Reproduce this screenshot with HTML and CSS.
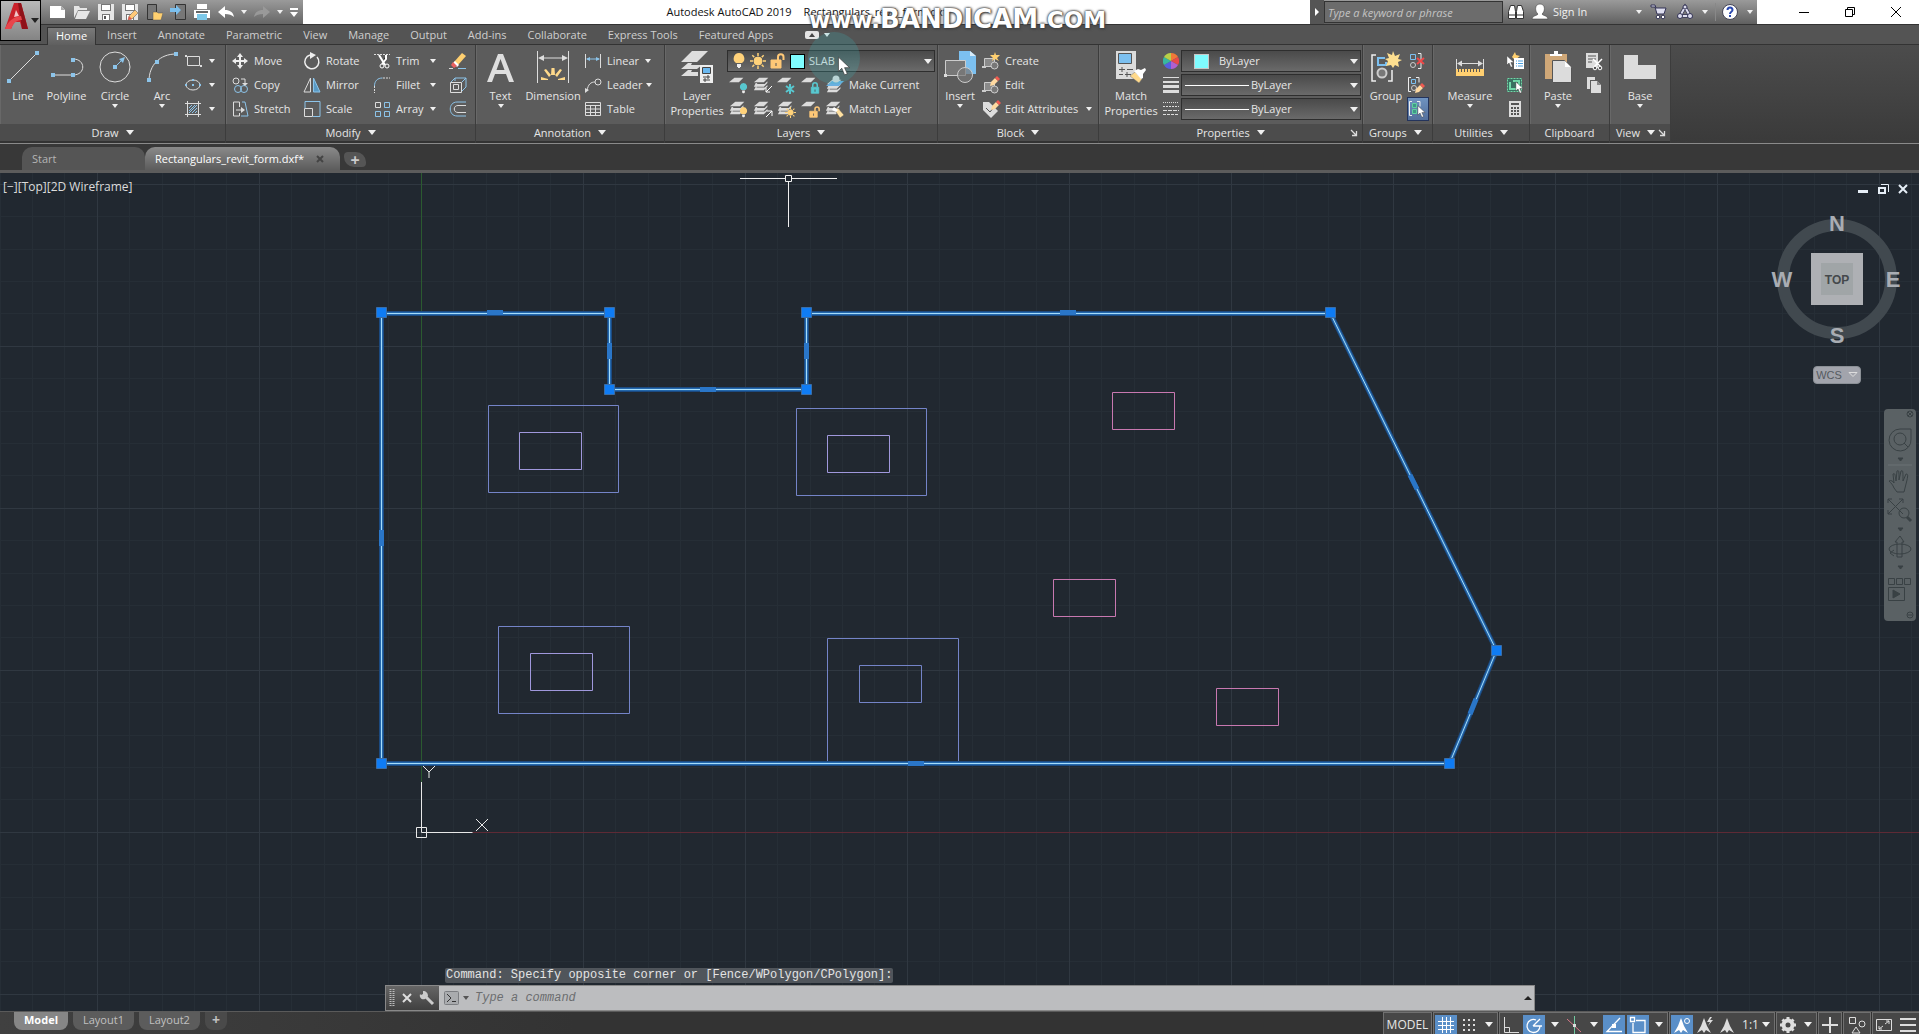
FILE: index.html
```html
<!DOCTYPE html>
<html lang="en">
<head>
<meta charset="utf-8">
<title>Autodesk AutoCAD 2019 - Rectangulars_revit_form.dxf</title>
<link rel="stylesheet" href="styles.css">
</head>
<body>
<svg class="defs" aria-hidden="true">
  <symbol id="sheets" viewBox="0 0 20 20"><path fill="#dcdcdc" d="M7 3h10l-5 5H1zM3 9h2l-1 1h9l3-3v2l-4 4H1zM3 13h1v1h9l3-3v2l-4 4H1z"/></symbol>
  <symbol id="sheet" viewBox="0 0 20 20"><path fill="#dcdcdc" d="M6 3h10l-5 5H0z"/></symbol>
  <symbol id="bulb" viewBox="0 0 12 16"><path d="M6 0a5.500 5.500 0 0 0-3 10h6A5.500 5.500 0 0 0 6 0z"/><path fill="#eee" d="M4 11h4v3H7v1H5v-1H4z"/></symbol>
  <symbol id="sun" viewBox="0 0 16 16"><circle cx="8" cy="8" r="4"/><path stroke-width="1.500" d="M8 0v3M8 13v3M0 8h3M13 8h3M2.300 2.300l2 2M11.700 11.700l2 2M2.300 13.700l2-2M11.700 4.300l2-2"/></symbol>
  <symbol id="unlock" viewBox="0 0 16 16"><path d="M1 7h10v8H1z"/><path fill="none" stroke-width="2" d="M8 7V4a2.500 2.500 0 0 1 5.500 0v3"/><path stroke="#555" d="M6 10v3"/></symbol>
  <symbol id="lock" viewBox="0 0 16 16"><path d="M3 7h10v8H3z"/><path fill="none" stroke-width="2" d="M5 7V4a3 3 0 0 1 6 0v3"/><path stroke="#444" d="M8 10v3"/></symbol>
  <symbol id="block" viewBox="0 0 20 20"><path fill="#8a8a8a" stroke="#ccc" d="M3.500 7.500h10v8h-10z"/><path fill="#ccc" d="M1 15h4v2H1z"/><circle cx="13.500" cy="14.500" r="3.500" fill="#777" stroke="#ccc"/></symbol>
  <symbol id="pencil" viewBox="0 0 10 10"><path fill="#ffd9a0" d="M0 10l1-4 4-4 3 3-4 4z"/><path fill="#f05a50" d="M5 2l2-2 3 3-2 2z"/></symbol>
  <symbol id="cursor" viewBox="0 0 12 18"><path fill="#fff" stroke="#333" stroke-width=".6" d="M1 1v13l3-3 2.500 6 2.500-1-2.500-5.500H11z"/></symbol>
  <symbol id="launch" viewBox="0 0 8 8"><path fill="none" stroke="#ddd" stroke-width="1.300" d="M1 1l5 5M6.500 2v4.500H2"/></symbol>
</svg>

<header class="titlebar">
  <button class="app-button" aria-label="Application menu">
    <svg width="39" height="39" viewBox="0 0 39 39"><path fill="#c9222b" d="M13 2h7l7 26h-6l-2-7h-6l-3 7H4z"/><path fill="#fff" opacity=".75" d="M15 9l-2 7 5-1z"/><path fill="#8f1219" d="M17 2h3l7 26h-6z"/><path fill="#e8464c" d="M4 28c3-8 8-12 16-13l1 4c-5 0-8 2-11 9z"/><path fill="#222" d="M30 17h8l-4 5z"/></svg>
  </button>
  <div class="quick">
    <button aria-label="New"><svg width="18" height="18"><path fill="#fff" d="M1 3h11l4 4v8H1z"/><path fill="#aaa" d="M12 3v4h4z"/></svg></button>
    <button aria-label="Open"><svg width="18" height="18"><path fill="#e6e6e6" d="M1 3h5l1 2h7v2H5l-4 8zM5 8h12l-4 8H2z"/></svg></button>
    <button aria-label="Save"><svg width="18" height="18"><path fill="#e6e6e6" d="M1 1h16v16H1z"/><path fill="#777" d="M4 1h10v7H4zM5 11h8v6H5z"/><path fill="#fff" d="M5 2h8v5H5zM6 12h6v5H6z"/><path fill="#555" d="M7 13h2v3H7z"/></svg></button>
    <button aria-label="Save as"><svg width="18" height="18"><path fill="#e6e6e6" d="M1 1h16v16H1z"/><path fill="#777" d="M4 1h10v7H4zM5 11h8v6H5z"/><path fill="#fff" d="M5 2h8v5H5zM6 12h6v5H6z"/><path fill="#ffc877" stroke="#555" stroke-width=".5" d="M7 17l1-4 6-6 3 3-6 6z"/><path fill="#e0564c" d="M7 17l1-4 3 3z"/></svg></button>
    <button aria-label="Open from mobile"><svg width="18" height="18"><path fill="#777" stroke="#333" d="M2.500 1.500h9v15h-9z"/><path fill="#ffd070" stroke="#555" stroke-width=".5" d="M8 9h4l1 1h5l-2 7H8z"/></svg></button>
    <button aria-label="Save to mobile"><svg width="18" height="18"><path fill="#777" stroke="#333" d="M6.500 1.500h10v15h-10z"/><path fill="#7cc0ee" d="M1 5h6V2l5 5-5 5V9H1z"/></svg></button>
    <button aria-label="Plot"><svg width="18" height="18"><path fill="#fff" d="M4 1h10v5H4zM1 7h16v8H1z"/><path fill="#666" d="M3 8h12v2H3z"/><path fill="#7cc8e8" d="M4 11h10v6H4z"/></svg></button>
    <button aria-label="Undo"><svg width="18" height="18"><path fill="#fff" d="M1 9l7-6v4c5 0 8 2 9 7-2-2-5-3-9-3v4z"/></svg></button>
    <button class="narrow" aria-label="Undo list"><i class="caret"></i></button>
    <button aria-label="Redo"><svg width="18" height="18"><path fill="#999" d="M17 9l-7-6v4c-5 0-8 2-9 7 2-2 5-3 9-3v4z"/></svg></button>
    <button class="narrow" aria-label="Redo list"><i class="caret"></i></button>
    <button class="narrow last" aria-label="Customize"><svg width="10" height="14"><path fill="#fff" d="M1 3h8v2H1zM1 7h8l-4 5z"/></svg></button>
  </div>
  <div class="window-title"><span>Autodesk AutoCAD 2019</span><span>Rectangulars_revit_form.dxf</span></div>
  <div class="info">
    <button class="expand" aria-label="Collapse search"><svg width="6" height="10"><path fill="#fff" d="M1 1l4 4-4 4z"/></svg></button>
    <input type="text" placeholder="Type a keyword or phrase" aria-label="Search help">
    <button class="wide" aria-label="Search"><svg width="18" height="18"><path fill="#fff" stroke="#333" d="M3.500 2.500h4l1 6v7h-7v-7zM10.500 2.500h4l2 6v7h-7v-7z"/><path stroke="#333" d="M2 12h6M10 12h6"/></svg></button>
    <button class="signin"><svg width="18" height="18"><path fill="#fff" stroke="#444" stroke-width=".6" d="M9 1c6 0 5 8 2 10 1 2 5 1 6 5H1c1-4 5-3 6-5C4 9 3 1 9 1z"/></svg>Sign In<i class="caret"></i></button>
    <button class="wide" aria-label="Store"><svg width="18" height="18"><path fill="#dde" stroke="#335" d="M1 2h4l1 3h10l-2 6H7L5 4H1z"/><circle cx="8" cy="14" r="1.800" fill="#fff" stroke="#335"/><circle cx="13" cy="14" r="1.800" fill="#fff" stroke="#335"/></svg></button>
    <button class="wide" aria-label="Apps"><svg width="18" height="18"><path fill="none" stroke="#335" stroke-width="3.500" d="M9 4l5 9H4z"/><path fill="none" stroke="#dde" stroke-width="2" d="M9 4l5 9H4z"/><g fill="#dde" stroke="#335"><circle cx="9" cy="4" r="2"/><circle cx="4" cy="13" r="2.500"/><circle cx="14" cy="13" r="2.500"/></g></svg></button>
    <button class="narrow" aria-label="Apps list"><i class="caret"></i></button>
    <button class="help" aria-label="Help"><svg width="18" height="18"><circle cx="9" cy="9" r="7.500" fill="#fff" stroke="#445"/><path fill="none" stroke="#2b49b0" stroke-width="2" d="M6.500 7c0-3.500 5-3.500 5 0 0 2-2.500 1.500-2.500 4M9 12v2"/></svg></button>
    <button class="narrow" aria-label="Help list"><i class="caret"></i></button>
  </div>
  <div class="window-buttons">
    <button aria-label="Minimize"><svg width="12" height="12"><path stroke="#000" d="M1 6.500h10"/></svg></button>
    <button aria-label="Restore"><svg width="12" height="12"><path fill="none" stroke="#000" d="M1.500 3.500h7v7h-7zM3.500 3V1.500h7v7H9"/></svg></button>
    <button aria-label="Close"><svg width="12" height="12"><path stroke="#000" d="M1 1l10 10M11 1L1 11"/></svg></button>
  </div>
</header>

<nav class="tabs">
  <a class="active" href="#">Home</a><a href="#">Insert</a><a href="#">Annotate</a><a href="#">Parametric</a><a href="#">View</a><a href="#">Manage</a><a href="#">Output</a><a href="#">Add-ins</a><a href="#">Collaborate</a><a href="#">Express Tools</a><a href="#">Featured Apps</a>
  <button class="ribbon-toggle" aria-label="Minimize ribbon"><svg width="14" height="8"><rect width="14" height="8" rx="2" fill="#e4e4e4"/><path fill="#444" d="M4 6l3-4 3 4z"/></svg><i class="caret"></i></button>
</nav>

<div class="ribbon">
  <section class="panel draw">
    <div class="body">
      <button class="big w42"><svg width="32" height="32"><path stroke="#ddd" d="M2 30L30 2"/><path fill="#8cc4ea" d="M0 28h4v4H0zM28 0h4v4h-4z"/></svg>Line</button>
      <button class="big w46"><svg width="34" height="32"><path fill="none" stroke="#ddd" d="M3 24h20M23 8c13 0 13 16 0 16"/><path fill="#8cc4ea" d="M1 22h4v4H1zM21 22h4v4h-4zM21 7h4v4h-4z"/></svg>Polyline</button>
      <button class="big w52"><svg width="32" height="32"><circle cx="16" cy="16" r="15" fill="none" stroke="#ddd"/><path stroke="#8cc4ea" d="M16 16l7-7"/><path fill="#8cc4ea" d="M14 14h4v4h-4zM26 6l-2 6-4-4z"/></svg>Circle<i class="caret"></i></button>
      <button class="big w42"><svg width="32" height="32"><path fill="none" stroke="#ddd" d="M3 30C3 14 14 3 30 3"/><path fill="#8cc4ea" d="M1 27h4v4H1zM9 9h4v4H9zM28 1h4v4h-4z"/></svg>Arc<i class="caret"></i></button>
      <div class="rows w36">
        <button class="tool" aria-label="Rectangle"><svg width="20" height="20"><path fill="none" stroke="#ddd" d="M4.500 5.500h12v9h-12z"/><path fill="#ddd" d="M2 4h2v2H2zM17 14h2v2h-2z"/></svg><i class="caret"></i></button>
        <button class="tool" aria-label="Ellipse"><svg width="20" height="20"><ellipse cx="10" cy="10" rx="7" ry="5" fill="none" stroke="#ddd"/><path fill="#8cc4ea" d="M9 9h2v2H9zM9 4h2v2H9zM2 9h2v2H2zM16 9h2v2h-2z"/></svg><i class="caret"></i></button>
        <button class="tool" aria-label="Hatch"><svg width="20" height="20"><path fill="none" stroke="#ddd" d="M4.500 2v16M15.500 2v16M2 4.500h16M2 15.500h16"/><path stroke="#8cc4ea" d="M6 9l3-3M6 12l6-6M6 14l8-8M9 14l5-5M12 14l2-2"/></svg><i class="caret"></i></button>
      </div>
    </div>
    <h2>Draw<i class="caret lg"></i></h2>
  </section>

  <section class="panel modify">
    <div class="body">
      <div class="rows w72">
        <button class="tool"><svg width="20" height="20"><path fill="#eee" d="M10 2l3 4h-2v3h3V7l4 3-4 3v-2h-3v3h2l-3 4-3-4h2v-3H6v2l-4-3 4-3v2h3V6H7z"/></svg>Move</button>
        <button class="tool"><svg width="20" height="20"><g fill="none"><circle cx="6" cy="6" r="3" stroke="#ddd"/><path stroke="#ddd" d="M11 4h4v5"/><circle cx="8" cy="14" r="3.500" stroke="#8cc4ea"/><circle cx="14" cy="14" r="3.500" stroke="#8cc4ea"/></g><path fill="#ddd" d="M12 8h6l-3 3z"/></svg>Copy</button>
        <button class="tool"><svg width="20" height="20"><path fill="none" stroke="#ddd" d="M9.500 8V3h-6v14h6v-3M6 11h6"/><path fill="#ddd" d="M11 8l4 3-4 3z"/><path fill="none" stroke="#8cc4ea" d="M12 3h3l3 14h-7"/></svg>Stretch</button>
      </div>
      <div class="rows w70">
        <button class="tool"><svg width="20" height="20"><path fill="none" stroke="#eee" stroke-width="1.500" d="M8 4a7 7 0 1 0 7 2"/><path fill="#eee" d="M8 1l6 3-6 4z"/></svg>Rotate</button>
        <button class="tool"><svg width="20" height="20"><path fill="none" stroke="#ddd" d="M8.500 3v14H2z"/><path fill="#5a9ac4" stroke="#8cc4ea" d="M11.500 3v14H18z"/></svg>Mirror</button>
        <button class="tool"><svg width="20" height="20"><path fill="none" stroke="#8cc4ea" d="M3 9V2.500h15v15h-7"/><path fill="none" stroke="#ddd" d="M2.500 9.500h8v8h-8z"/></svg>Scale</button>
      </div>
      <div class="rows w76">
        <button class="tool"><svg width="20" height="20"><path stroke="#ddd" stroke-dasharray="2 1" d="M2 3.500h16"/><path stroke="#fff" stroke-width="2" d="M7 4l6 10M14 4v4l-4 5"/><circle cx="10" cy="15" r="2" fill="none" stroke="#fff"/><circle cx="15" cy="15" r="2" fill="none" stroke="#fff"/></svg>Trim<i class="caret"></i></button>
        <button class="tool"><svg width="20" height="20"><path fill="none" stroke="#8cc4ea" d="M2.500 11c0-5 3-8 8-8"/><path stroke="#ddd" stroke-dasharray="2 1" d="M11 3h7M2.500 11v7"/></svg>Fillet<i class="caret"></i></button>
        <button class="tool"><svg width="20" height="20"><g fill="none"><path stroke="#ddd" d="M3.500 3.500h5v5h-5z"/><path stroke="#8cc4ea" d="M12.500 3.500h5v5h-5zM3.500 12.500h5v5h-5zM12.500 12.500h5v5h-5z"/></g></svg>Array<i class="caret"></i></button>
      </div>
      <div class="rows">
        <button class="tool" aria-label="Erase"><svg width="20" height="20"><path fill="#ffd070" d="M6 11l8-9 4 3-8 9z"/><path fill="#fff" d="M5 12l2-2 4 4-2 2z"/><path fill="#e86060" d="M3 14l2-3 4 4-3 2z"/><path stroke="#8cc4ea" d="M10 17.500h8"/><path stroke="#ddd" d="M1 17.500h4"/></svg></button>
        <button class="tool" aria-label="Explode"><svg width="20" height="20"><path fill="none" stroke="#8cc4ea" d="M3 7l4-4h11v9l-4 4M14 7l4-4M7 3v3"/><path fill="none" stroke="#ddd" d="M2.500 7.500h11v10h-11zM5.500 9.500h5v5h-5z"/></svg></button>
        <button class="tool" aria-label="Offset"><svg width="20" height="20"><path fill="none" stroke="#8cc4ea" d="M18 3H9c-9 0-9 14 0 14h9"/><path fill="none" stroke="#ddd" d="M18 6.500h-8c-5 0-5 7 0 7h8"/></svg></button>
      </div>
    </div>
    <h2>Modify<i class="caret lg"></i></h2>
  </section>

  <section class="panel annotation">
    <div class="body">
      <button class="big w46"><svg width="32" height="32"><path fill="#dedede" d="M13 3h5l11 28h-5l-3-8H10l-3 8H2zM15.500 8L11.500 19h8z"/></svg>Text<i class="caret"></i></button>
      <button class="big w60"><svg width="34" height="32"><path stroke="#ddd" d="M1.500 0v32M32.500 0v32M4 7h26"/><path fill="#ddd" d="M2 7l6-3v6zM32 7l-6-3v6z"/><path fill="#ffd98a" d="M15.500 17h3l.5 7h-4zM8 19l2-1 5 6-2 2zM26 19l-2-1-5 6 2 2zM5 26l7 2v1H5zM29 26l-7 2v1h7z"/></svg>Dimension</button>
      <div class="rows w76">
        <button class="tool"><svg width="20" height="20"><path stroke="#ddd" d="M2.500 3v14M17.500 3v14"/><path stroke="#8cc4ea" d="M4 8h12"/><path fill="#8cc4ea" d="M3 8l4-2v4zM17 8l-4-2v4z"/></svg>Linear<i class="caret"></i></button>
        <button class="tool"><svg width="20" height="20"><path fill="none" stroke="#ddd" d="M4 16c1-7 4-9 8-9"/><path fill="#ddd" d="M2 18V13l4 2z"/><circle cx="15" cy="7" r="3" fill="none" stroke="#ddd"/></svg>Leader<i class="caret"></i></button>
        <button class="tool"><svg width="20" height="20"><path fill="none" stroke="#ddd" d="M2.500 3.500h15v13h-15zM2 6.500h16M2 10h16M2 13.500h16M7.500 6v11M12.500 6v11"/></svg>Table</button>
      </div>
    </div>
    <h2>Annotation<i class="caret lg"></i></h2>
  </section>

  <section class="panel layers">
    <div class="body">
      <button class="big w60"><svg width="34" height="32"><path fill="#dedede" d="M12 0h16L17 11H1zM8 12h4l-1 2h11l-5 4H1zM8 19h4l-1 2h7v4H1z"/><path fill="#eee" d="M20 14h13v18H20z"/><path fill="#6ab8f0" stroke="#444" d="M22.500 16.500h8v6h-8z"/><path stroke="#444" d="M23 26h7M23 29h7M28 24v4M25 27v4"/></svg>Layer<br>Properties</button>
      <div class="stack">
        <div class="combo layer-combo">
          <svg width="14" height="16" fill="#ffd27a"><use href="#bulb" width="14" height="16"/></svg>
          <svg width="16" height="16" fill="#ffd27a" stroke="#ffd27a"><use href="#sun" width="16" height="16"/></svg>
          <svg width="16" height="16" fill="#ffc877" stroke="#ffc877"><use href="#unlock" width="16" height="16"/></svg>
          <i class="swatch outlined"></i>
          <select aria-label="Current layer"><option>SLAB</option></select>
          <i class="caret lg"></i>
        </div>
        <div class="icon-line">
          <button class="cell" aria-label="Layer off"><svg width="20" height="20"><use href="#sheet" width="18" height="18"/><use href="#bulb" x="10" y="8" width="9" height="11" fill="#58c8d0"/></svg></button>
          <button class="cell" aria-label="Isolate"><svg width="20" height="20"><use href="#sheets" width="18" height="18"/><path fill="none" stroke="#fff" d="M19 11l-6 6M13 13v4h4"/></svg></button>
          <button class="cell" aria-label="Freeze"><svg width="20" height="20"><use href="#sheet" width="18" height="18"/><path stroke="#58c8d0" stroke-width="2" d="M13 9v10M9 11l8 6M17 11l-8 6"/></svg></button>
          <button class="cell" aria-label="Lock"><svg width="20" height="20" fill="#58c8d0" stroke="#58c8d0"><use href="#sheet" width="18" height="18" stroke="none"/><use href="#lock" x="8" y="7" width="12" height="12"/></svg></button>
          <button class="tool"><svg width="20" height="20"><use href="#sheets" y="2" width="20" height="18"/><path fill="#6ab0e0" d="M7 6h12l-5 5H1z"/><circle cx="11" cy="4" r="3.500" fill="#ddd"/></svg>Make Current</button>
        </div>
        <div class="icon-line">
          <button class="cell" aria-label="Layer on"><svg width="20" height="20"><use href="#sheets" width="18" height="18"/><use href="#bulb" x="10" y="8" width="9" height="11" fill="#ffd27a"/></svg></button>
          <button class="cell" aria-label="Unisolate"><svg width="20" height="20"><use href="#sheets" width="18" height="18"/><path fill="none" stroke="#fff" d="M13 18l6-6M14 12h5v5"/></svg></button>
          <button class="cell" aria-label="Thaw"><svg width="20" height="20" fill="#ffd27a" stroke="#ffd27a"><use href="#sheets" width="18" height="18" stroke="none"/><use href="#sun" x="8" y="8" width="11" height="11"/></svg></button>
          <button class="cell" aria-label="Unlock"><svg width="20" height="20" fill="#ffc877" stroke="#ffc877"><use href="#sheet" width="18" height="18" stroke="none"/><use href="#unlock" x="8" y="7" width="12" height="12"/></svg></button>
          <button class="tool"><svg width="20" height="20"><use href="#sheets" width="18" height="18"/><path fill="#ffe0a0" stroke="#555" stroke-width=".5" d="M9 10l4-1 6 7-4 3z"/><path fill="#fff" d="M9 8l4 3-2 2-4-2z"/></svg>Match Layer</button>
        </div>
      </div>
    </div>
    <h2>Layers<i class="caret lg"></i></h2>
  </section>

  <section class="panel block">
    <div class="body">
      <button class="big w42"><svg width="34" height="32"><path fill="#7cc0f0" d="M16 0h11l6 5v18H16z"/><path fill="#d8ecfa" d="M27 0l6 5h-6z"/><path fill="#777" stroke="#ccc" d="M2.500 9.500h20v15h-20z"/><path fill="#ddd" d="M1 23h3v3H1z"/><circle cx="22" cy="24" r="7.500" fill="#777" fill-opacity=".7" stroke="#ccc"/></svg>Insert<i class="caret"></i></button>
      <div class="rows grow">
        <button class="tool"><svg width="20" height="20"><use href="#block" width="20" height="20"/><path fill="#ffd070" d="M14 1l1 3 4 0-3 3 2 3-4-2-3 2 1-3-3-3h4z"/></svg>Create</button>
        <button class="tool"><svg width="20" height="20"><use href="#block" width="20" height="20"/><use href="#pencil" x="9" y="1" width="10" height="10"/></svg>Edit</button>
        <button class="tool"><svg width="20" height="20"><path fill="#ddd" d="M2 3h6l9 9-7 7-8-8z"/><path stroke="#555" fill="none" d="M5 9l4 4 4-5"/><use href="#pencil" x="10" y="1" width="10" height="10"/></svg>Edit Attributes<i class="caret"></i></button>
      </div>
    </div>
    <h2>Block<i class="caret lg"></i></h2>
  </section>

  <section class="panel properties">
    <div class="body">
      <button class="big w60"><svg width="32" height="32"><path fill="#dcdcdc" d="M1 0h20v28H1z"/><path fill="#7cc0f0" stroke="#555" d="M3.500 2.500h13v10h-13z"/><path stroke="#555" d="M4 18.500h6M12 18.500h6M4 23.500h4M10 23.500h6M7 16v5M12 21v5"/><path fill="#ffd98a" stroke="#777" stroke-width=".5" d="M15 25l5-4 7 7-3 4z"/><path fill="#fff" d="M19 20l4-2 3 1 4-2 1 2-3 4v4l-2 1z"/></svg>Match<br>Properties</button>
      <div class="prop-rows">
        <label for="color"><svg width="16" height="16" viewBox="-8 -8 16 16"><path fill="#f07838" d="M0 0V-8A8 8 0 0 1 7-4z"/><path fill="#e8484c" d="M0 0L7-4A8 8 0 0 1 7 4z"/><path fill="#b060d0" d="M0 0L7 4A8 8 0 0 1 0 8z"/><path fill="#5560e0" d="M0 0V8A8 8 0 0 1-7 4z"/><path fill="#38b8a0" d="M0 0L-7 4A8 8 0 0 1-7-4z"/><path fill="#b8d048" d="M0 0L-7-4A8 8 0 0 1 0-8z"/></svg></label>
        <div class="combo color-combo"><i class="swatch"></i><select id="color"><option>ByLayer</option></select><i class="caret lg"></i></div>
        <label for="weight"><svg width="16" height="16"><path fill="#ddd" d="M0 0h16v1H0zM0 4h16v2H0zM0 8h16v3H0zM0 13h16v3H0z"/></svg></label>
        <div class="combo line-combo"><i class="rule"></i><select id="weight"><option>ByLayer</option></select><i class="caret lg"></i></div>
        <label for="ltype"><svg width="16" height="16"><g stroke="#ddd"><path stroke-dasharray="1 1" d="M0 1.500h16"/><path stroke-dasharray="2 1" d="M0 5.500h16"/><path stroke-dasharray="4 1" d="M0 9.500h16"/><path stroke-dasharray="3 1" d="M0 13.500h16"/></g></svg></label>
        <div class="combo line-combo"><i class="rule"></i><select id="ltype"><option>ByLayer</option></select><i class="caret lg"></i></div>
      </div>
    </div>
    <h2>Properties<i class="caret lg"></i><svg class="launch" width="8" height="8"><use href="#launch" width="8" height="8"/></svg></h2>
  </section>

  <section class="panel groups">
    <div class="body">
      <button class="big w42"><svg width="32" height="32"><path fill="none" stroke="#eee" stroke-width="1.500" d="M6 4H2v26h4M18 30h4V19"/><path fill="none" stroke="#7cc0f0" stroke-width="2" d="M15 7H8v7h8v-3"/><circle cx="12" cy="22" r="4.500" fill="#777" stroke="#ccc" stroke-width="2"/><path fill="#ffe090" d="M23 0l2 5 5-2-2 5 4 1-4 2 1 5-4-2-2 3-2-3-5 1 2-5-3-2 4-1-2-5 5 2z"/></svg>Group</button>
      <div class="rows">
        <button class="tool" aria-label="Ungroup"><svg width="20" height="20"><g fill="none"><path stroke="#7cc0f0" d="M3.500 3.500h5v5h-5z"/><circle cx="6" cy="14" r="2.500" stroke="#ccc"/><path stroke="#eee" d="M11 2.500h3v15h-3"/><path stroke="#f04848" stroke-width="2" d="M10 7l7 6M17 7l-7 6"/></g></svg></button>
        <button class="tool" aria-label="Group edit"><svg width="20" height="20"><g fill="none"><path stroke="#eee" d="M4 2.500H1.500v14H4M9 2.500h3v5"/><path stroke="#7cc0f0" d="M4.500 4.500h4v4h-4z"/><circle cx="7" cy="13" r="2.500" stroke="#ccc"/></g><use href="#pencil" x="8" y="8" width="10" height="10"/></svg></button>
        <button class="tool on" aria-label="Group selection"><svg width="20" height="20"><path fill="none" stroke="#eee" d="M4 2.500H1.500v14H4M9 2.500h3v5"/><path fill="#409888" stroke="#60d0a0" d="M4.500 4.500h4v4h-4zM4.500 10.500h4v4h-4z"/><use href="#cursor" x="9" y="6" width="9" height="13"/></svg></button>
      </div>
    </div>
    <h2>Groups<i class="caret lg"></i></h2>
  </section>

  <section class="panel utilities">
    <div class="body">
      <button class="big w70"><svg width="32" height="32"><path stroke="#ddd" d="M2.500 8v10M29.500 8v10M4 12.500h24"/><path fill="#ddd" d="M3 12.500l5-3v6zM29 12.500l-5-3v6z"/><path fill="#ffcf70" d="M2 18h28v7H2z"/><path stroke="#555" stroke-dasharray="1 2" stroke-width="3" d="M4 19.500h24"/></svg>Measure<i class="caret"></i></button>
      <div class="rows">
        <button class="tool" aria-label="Quick select"><svg width="20" height="20"><path fill="#ffd070" d="M10 1l1 3 4 1-5 4-3-3z"/><use href="#cursor" x="1" y="4" width="9" height="13"/><path fill="#fff" d="M9 7h10v11H9z"/><path stroke="#4aa0e0" d="M11 10h1M13 10h5M11 12.500h1M13 12.500h5M11 15h1M13 15h5"/></svg></button>
        <button class="tool" aria-label="Select all"><svg width="20" height="20"><path fill="#397060" stroke="#70d8a8" stroke-dasharray="2 1" d="M2.500 3.500h14v13h-14z"/><path fill="none" stroke="#70d8a8" stroke-width="2" d="M5 7v7h6M8 6h6v4"/><use href="#cursor" x="10" y="6" width="9" height="13"/></svg></button>
        <button class="tool" aria-label="Calculator"><svg width="20" height="20"><path fill="#ddd" d="M4 2h12v16H4z"/><path fill="#555" d="M6 4h8v2H6zM6 8h2v2H6zM9 8h2v2H9zM12 8h2v2h-2zM6 11h2v2H6zM9 11h2v2H9zM12 11h2v2h-2zM6 14h2v2H6zM9 14h2v2H9zM12 14h2v2h-2z"/></svg></button>
      </div>
    </div>
    <h2>Utilities<i class="caret lg"></i></h2>
  </section>

  <section class="panel clipboard">
    <div class="body">
      <button class="big w52"><svg width="32" height="32"><path fill="#d0a878" d="M3 3h22v25H3z"/><path fill="#fff" d="M8 3h4V0h4v3h4v2H8z"/><path fill="#dcdcdc" stroke="#555" d="M10.500 9.500h12l7 7v15h-19z"/><path fill="#fff" d="M23 10v6h6z"/></svg>Paste<i class="caret"></i></button>
      <div class="rows">
        <button class="tool" aria-label="Cut"><svg width="20" height="20"><path fill="#ddd" d="M2 2h12v15H2z"/><path stroke="#555" d="M4 5h8M4 8h8M4 11h4"/><path stroke="#fff" stroke-width="1.500" d="M9 8l8 8M18 8l-8 8"/><circle cx="11" cy="17" r="1.800" fill="#555" stroke="#fff"/><circle cx="16" cy="17" r="1.800" fill="#555" stroke="#fff"/></svg></button>
        <button class="tool" aria-label="Copy clip"><svg width="20" height="20"><path fill="#ddd" d="M3 2h8v3H6v9H3z"/><path fill="#ddd" d="M7 6h6l4 4v8H7z"/><path fill="#888" d="M13 6v4h4z"/></svg></button>
      </div>
    </div>
    <h2>Clipboard</h2>
  </section>

  <section class="panel view">
    <div class="body">
      <button class="big w60"><svg width="32" height="32"><path fill="#dcdcdc" d="M0 4h14v10h18v14H0z"/></svg>Base<i class="caret"></i></button>
    </div>
    <h2>View<i class="caret lg"></i><svg class="launch" width="8" height="8"><use href="#launch" width="8" height="8"/></svg></h2>
  </section>
</div>

<nav class="files">
  <a class="file start" href="#">Start</a>
  <a class="file current" href="#">Rectangulars_revit_form.dxf*<svg width="8" height="8"><path stroke="#444" stroke-width="2" d="M1 1l6 6M7 1L1 7"/></svg></a>
  <button class="add" aria-label="New drawing">+</button>
</nav>

<main class="canvas">
  <svg class="drawing" width="100%" height="100%">
    <defs>
      <pattern id="grid" patternUnits="userSpaceOnUse" x="97" y="184" width="162" height="162">
        <path stroke="#262e36" d="M32.500 0v162M65.500 0v162M97.500 0v162M129.500 0v162M0 32.500h162M0 65.500h162M0 97.500h162M0 129.500h162"/>
        <path stroke="#303841" d="M.5 0v162M0 .5h162"/>
      </pattern>
    </defs>
    <g transform="translate(0 -173)">
      <rect width="100%" height="200%" fill="url(#grid)"/>
      <path stroke="#2b5a30" d="M421.500 172v610"/>
      <path stroke="#5e2a35" d="M472 832.500h3000"/>
      <g fill="none" stroke="#7484c8">
        <path d="M488.500 405.500h130v87h-130zM796.500 408.500h130v87h-130zM498.500 626.500h131v87h-131zM827.500 638.500h131v124h-131zM859.500 665.500h62v37h-62z"/>
        <path stroke="#a098dc" d="M519.500 432.500h62v37h-62zM827.500 435.500h62v37h-62zM530.500 653.500h62v37h-62z"/>
        <path stroke="#c878b0" d="M1112.500 392.500h62v37h-62zM1053.500 579.500h62v37h-62zM1216.500 688.500h62v37h-62z"/>
      </g>
      <g fill="none" stroke-linejoin="round">
        <path stroke="#1c4a80" stroke-width="5" d="M381.500 313.500H609.500V389.500H806.500V313.500H1330.500L1496.500 650.500 1449.500 763.500H381.500z"/>
        <path stroke="#2468ac" stroke-width="3" d="M381.500 313.500H609.500V389.500H806.500V313.500H1330.500L1496.500 650.500 1449.500 763.500H381.500z"/>
        <path stroke="#a6dcfa" d="M381.500 313.500H609.500V389.500H806.500V313.500H1330.500L1496.500 650.500 1449.500 763.500H381.500z"/>
        <path stroke="#2a76c8" stroke-width="5" d="M487 312.500h16M700 389.500h16M1060 312.500h16M908 763.500h16M609.500 343v16M806.500 343v16M381.500 530v16M1410 475l7 14M1476 699l-6 15"/>
      </g>
      <g fill="#0f7cf4" stroke="#3a6ea8"><path d="M376.500 307.500h10v10h-10zM604.500 307.500h10v10h-10zM604.500 384.500h10v10h-10zM801.500 384.500h10v10h-10zM801.500 307.500h10v10h-10zM1325.500 307.500h10v10h-10zM1491.500 645.500h10v10h-10zM1444.500 758.500h10v10h-10zM376.500 758.500h10v10h-10z"/></g>
      <g fill="none" stroke="#e8e8e8"><path d="M421.500 782v50.500h51M416.500 827.500h10v10h-10zM423 766l6 6 6-6M429 772v6M476 819l12 12M488 819l-12 12"/></g>
      <path fill="none" stroke="#f0f0f0" d="M740 178.500h45M791 178.500h46M788.500 182v45M785.500 175.500h6v6h-6z"/>
    </g>
  </svg>
  <div class="view-label"><a href="#">[−]</a><a href="#">[Top]</a><a href="#">[2D Wireframe]</a></div>
  <div class="view-tools">
    <div class="view-buttons">
      <button aria-label="Minimize drawing"><svg width="10" height="10"><path fill="#e6eef6" d="M0 6h10v3H0z"/></svg></button>
      <button aria-label="Restore drawing"><svg width="11" height="10"><path fill="none" stroke="#e6eef6" stroke-width="2" d="M1 4h6v5H1z"/><path fill="none" stroke="#e6eef6" d="M3 .5h7.500V8"/></svg></button>
      <button aria-label="Close drawing"><svg width="10" height="10"><path stroke="#e6eef6" stroke-width="2" d="M1 1l8 8M9 1L1 9"/></svg></button>
    </div>
    <svg class="cube" width="132" height="148" viewBox="0 -8 132 148">
      <circle cx="66" cy="66" r="54" fill="none" stroke="#41494f" stroke-width="12"/>
      <path fill="#aeb0b4" d="M40 40h52v52H40z"/><path fill="#a0a5a7" d="M50 50h32v32H50z"/>
      <g class="compass"><text x="66" y="18">N</text><text x="66" y="130">S</text><text x="11" y="74">W</text><text x="122" y="74">E</text></g>
      <text class="face" x="66" y="71">TOP</text>
    </svg>
    <button class="wcs">WCS<svg width="10" height="6"><path fill="none" stroke="#ddd" d="M1 .5h8l-4 4z"/></svg></button>
    <div class="navbar">
      <svg width="32" height="212" fill="none" stroke="#394144">
        <circle cx="26" cy="5" r="3"/><path d="M24 3l4 4M28 3l-4 4"/>
        <path d="M16 20h11v10a11 11 0 1 1-11-10z"/><circle cx="16" cy="30" r="6"/><path d="M20 34l4 4"/>
        <path fill="#394144" d="M14 49h5l-2.500 3z"/><path stroke="#6b7274" d="M4 56h24"/>
        <path d="M10 79c-1-3-3-5-5-7 2-1 4 0 5 2l-1-9c2-1 2 0 3 7l1-10c2-1 2 0 2 9l2-9c2-1 2 0 2 10l3-7c2 0 2 1 1 6l-3 12H13z"/>
        <path d="M4 90l15 15M19 90L4 105M4 94v-4h4M15 90h4v4M4 101v4h4"/><circle cx="20" cy="104" r="5"/><path stroke-width="3" d="M23 108l4 4"/>
        <path fill="#394144" d="M14 119h5l-2.500 3z"/>
        <path d="M13 148v-15h-2l5-6 4 6h-2v15z"/><ellipse cx="16" cy="140" rx="11" ry="5"/><path d="M10 141l-4 3 4 3"/>
        <path fill="#394144" d="M14 157h5l-2.500 3z"/>
        <path d="M4.500 169.500h6v6h-6zM12.500 169.500h6v6h-6zM20.500 169.500h6v6h-6zM4.500 178.500h16v13h-16z"/><path fill="#394144" d="M9 181l7 4-7 4z"/>
        <circle cx="26" cy="206" r="3"/><path d="M24 206h4"/>
      </svg>
    </div>
  </div>

  <div class="command">
    <output>Command: Specify opposite corner or [Fence/WPolygon/CPolygon]:</output>
    <div class="command-bar">
      <div class="command-tools">
        <svg width="6" height="18"><path stroke="#bbb" stroke-width="5" stroke-dasharray="1 1" d="M3 0v18"/><path stroke="#555" d="M3 0v18"/></svg>
        <button aria-label="Close command line"><svg width="10" height="10"><path stroke="#ddd" stroke-width="2" d="M1 1l8 8M9 1L1 9"/></svg></button>
        <button aria-label="Customize command line"><svg width="16" height="16"><path fill="none" stroke="#ccc" stroke-width="3" d="M7 7l7 7"/><path fill="#ccc" d="M4 1v3l-2 1-1-1c-1 4 2 6 5 5l3-3c0-3-2-5-5-5z"/></svg></button>
      </div>
      <svg width="15" height="14"><rect x=".5" y=".5" width="14" height="13" rx="1" fill="#a9abae" stroke="#7c7e82"/><path fill="none" stroke="#333" d="M3 3l4 4-4 4M8 10.500h4"/></svg>
      <i class="caret dark"></i>
      <input type="text" placeholder="Type a command" aria-label="Command">
      <svg width="8" height="6"><path fill="#222" d="M0 5l4-4 4 4z"/></svg>
    </div>
  </div>
</main>

<footer class="bottom">
  <nav class="layouts"><a class="active" href="#">Model</a><a href="#">Layout1</a><a href="#">Layout2</a><a class="plus" href="#" aria-label="New layout">+</a></nav>
  <div class="status">
    <div class="seg"><button class="model">MODEL</button></div>
    <div class="seg">
      <button class="on" aria-label="Grid"><svg width="18" height="18"><path stroke="#fff" d="M1 5.500h16M1 9.500h16M1 13.500h16M5.500 1v16M9.500 1v16M13.500 1v16"/></svg></button>
      <button aria-label="Snap"><svg width="18" height="18"><path stroke="#ddd" stroke-width="2" stroke-dasharray="2 3" d="M3 4h13M3 9h13M3 14h13"/></svg></button>
      <button class="arrow" aria-label="Snap settings"><i class="caret lg"></i></button>
    </div>
    <div class="seg">
      <button aria-label="Ortho"><svg width="18" height="18"><path fill="none" stroke="#ddd" d="M2.500 1v15.500H17M2.500 11.500h5v5"/></svg></button>
      <button class="on" aria-label="Polar"><svg width="18" height="18"><path fill="none" stroke="#fff" stroke-width="1.300" d="M11 4a6.500 6.500 0 1 0 4 6M8 10h9M8 10l7-7"/></svg></button>
      <button class="arrow" aria-label="Polar settings"><i class="caret lg"></i></button>
      <button aria-label="Isodraft"><svg width="18" height="18"><path stroke="#d87888" d="M2 3l14 13"/><path stroke="#70c8a0" d="M9.500 0v18"/><path fill="#ddd" d="M8 8h3v3H8z"/></svg></button>
      <button class="arrow" aria-label="Isodraft settings"><i class="caret lg"></i></button>
      <button class="on" aria-label="Object tracking"><svg width="18" height="18"><path fill="none" stroke="#fff" stroke-width="1.300" d="M15 2L2 15.500h15"/><path fill="#fff" d="M7 8h4v4H7z"/></svg></button>
      <button class="on" aria-label="Object snap"><svg width="18" height="18"><path fill="none" stroke="#fff" stroke-width="1.300" d="M7 4.500h9v12H4V7M1.500 1.500h4v4h-4z"/></svg></button>
      <button class="arrow" aria-label="Object snap settings"><i class="caret lg"></i></button>
    </div>
    <div class="seg">
      <button class="on" aria-label="Annotation visibility"><svg width="18" height="18"><path fill="#fff" d="M8 2l3 8 4 7-5-3-2 3-2-3-5 3 4-7z"/><circle cx="14" cy="5" r="2.500" fill="none" stroke="#fff"/></svg></button>
      <button aria-label="Auto scale"><svg width="18" height="18"><path fill="#ddd" d="M8 2l3 8 4 7-5-3-2 3-2-3-5 3 4-7zM14 1l-3 5h3l-2 4 5-6h-3l2-3z"/></svg></button>
      <button aria-label="Annotation scale"><svg width="18" height="18"><path fill="#ddd" d="M9 2l3 8 4 7-5-3-2 3-2-3-5 3 4-7z"/></svg></button>
      <button class="scale">1:1<i class="caret lg"></i></button>
    </div>
    <div class="seg">
      <button aria-label="Workspace"><svg width="18" height="18"><circle cx="9" cy="9" r="4.500" fill="none" stroke="#ddd" stroke-width="4"/><path stroke="#ddd" stroke-width="3" d="M9 1v3M9 14v3M1 9h3M14 9h3M3.500 3.500l2 2M12.500 12.500l2 2M3.500 14.500l2-2M12.500 5.500l2-2"/></svg></button>
      <button class="arrow" aria-label="Workspace list"><i class="caret lg"></i></button>
    </div>
    <div class="seg"><button aria-label="Monitor"><svg width="18" height="18"><path stroke="#ddd" stroke-width="2" d="M1 9h16M9 1v16"/></svg></button></div>
    <div class="seg"><button class="isolate" aria-label="Isolate objects"><svg width="18" height="18"><path fill="none" stroke="#ddd" d="M1.500 1.500h6v6h-6zM8 11l4 6H4z"/><circle cx="14" cy="8" r="3" fill="none" stroke="#ddd"/></svg></button></div>
    <div class="seg last">
      <button aria-label="Clean screen"><svg width="18" height="18"><path fill="none" stroke="#ddd" d="M1.500 3.500h15v11h-15zM10 8l4-3M11 5h3v3M8 10l-4 3M4 10v3h3"/></svg></button>
      <button aria-label="Customization"><svg width="18" height="18"><path stroke="#ddd" stroke-width="2" d="M1 3h16M1 9h16M1 15h16"/></svg></button>
    </div>
  </div>
</footer>

<div class="watermark"><small>www.</small>BANDICAM<small>.COM</small></div>
<div class="pointer"><svg width="52" height="52"><circle cx="26" cy="26" r="26" fill="#3cb4bc" opacity=".22"/><use href="#cursor" x="29" y="24" width="14" height="20"/></svg></div>
</body>
</html>
```
FILE: styles.css
```css
* { box-sizing: border-box; }
html, body { height: 100%; }
body {
  margin: 0;
  display: flex;
  flex-direction: column;
  overflow: hidden;
  background: #383838;
  color: #e6e6e6;
  font: 11px/16px "Open Sans", "Noto Sans", sans-serif;
}
button, input, select { font: inherit; color: inherit; background: none; border: 0; margin: 0; padding: 0; border-radius: 0; outline: 0; }
button { display: flex; align-items: center; justify-content: center; flex: none; white-space: nowrap; }
a { color: inherit; text-decoration: none; }
svg { display: block; flex: none; }
.defs { position: absolute; width: 0; height: 0; }

.caret { flex: none; width: 0; height: 0; border: 3px solid transparent; border-top: 4px solid #f0f0f0; border-bottom: 0; }
.caret.lg { border-width: 5px 4px 0; }
.caret.dark { border-top-color: #555; }

/* Title bar */
.titlebar { display: flex; flex: none; height: 24px; background: #fff; color: #111; position: relative; }
.app-button { position: absolute; left: 0; top: 0; z-index: 2; width: 41px; height: 41px; border: 1px solid #000; background: linear-gradient(#b8b8b8, #848484); }
.quick { display: flex; align-items: center; width: 303px; padding-left: 46px; background: linear-gradient(#9a9a9a, #666); }
.quick button { width: 24px; height: 24px; }
.quick .narrow { width: 12px; }
.quick .last { width: 16px; }
.window-title { flex: 1; display: flex; justify-content: center; align-items: center; gap: 12px; }
.info { display: flex; align-items: center; width: 447px; background: linear-gradient(#9a9a9a, #606060); color: #f0f0f0; }
.info .expand { width: 14px; height: 24px; background: #555; }
.info input { width: 179px; height: 22px; padding-left: 3px; border: 1px solid #333; background: #6c6c6c; font-style: italic; }
.info input::placeholder { color: #c4c4c4; opacity: 1; }
.info .narrow { width: 14px; }
.info .wide { width: 26px; }
.info .signin { width: 117px; gap: 4px; padding-left: 2px; justify-content: flex-start; }
.signin .caret { margin-left: auto; margin-right: 4px; }
.info .help { width: 28px; margin-left: 3px; border-left: 1px solid #888; }
.window-buttons { display: flex; width: 162px; padding-left: 24px; }
.window-buttons button { width: 46px; }

/* Ribbon tabs */
.tabs { display: flex; gap: 1px; flex: none; height: 21px; padding-left: 47px; background: #545454; border-top: 1px solid #333; border-bottom: 1px solid #333; color: #cfcfcf; }
.tabs a { padding: 2px 10px 0; height: 20px; }
.tabs .active { padding: 1px 8px 0; margin-top: 2px; background: linear-gradient(#7a7a7a, #5c5c5c); border: 1px solid #333; border-bottom: 0; color: #fff; line-height: 14px; }
.ribbon-toggle { gap: 5px; padding-left: 21px; }

/* Ribbon */
.ribbon { display: flex; flex: none; height: 99px; background: linear-gradient(#4c4c4c, #3a3a3a); border-bottom: 1px solid #8a8a8a; }
.panel { display: flex; flex-direction: column; flex: none; border-right: 1px solid #3c3c3c; background: #5c5c5c; box-shadow: inset 1px 0 #686868; }
.panel .body { display: flex; flex: 1; padding: 4px 2px 0; }
.panel h2 { position: relative; display: flex; align-items: center; justify-content: center; gap: 7px; margin: 0; height: 19px; background: #4c4c4c; border-bottom: 2px solid #333; font-size: 11px; font-weight: 400; }
.launch { position: absolute; right: 4px; top: 5px; }
.draw { width: 226px; }
.modify { width: 250px; }
.modify .body { padding-left: 4px; }
.annotation { width: 189px; }
.layers { width: 273px; }
.block { width: 161px; }
.block .body { padding-left: 1px; }
.properties { width: 264px; }
.groups { width: 70px; }
.utilities { width: 97px; }
.clipboard { width: 80px; }
.view { width: 61px; }
.view .body { padding-left: 0; }
.view h2, .groups h2 { justify-content: flex-start; padding-left: 6px; }

.big { flex-direction: column; justify-content: flex-start; height: 74px; padding-top: 2px; line-height: 15px; }
.big svg { margin-bottom: 5px; }
.big .caret { margin-top: 1px; }
.w36 { width: 36px; }
.w42 { width: 42px; }
.w46 { width: 45px; }
.w52 { width: 52px; }
.w60 { width: 60px; }
.w70 { width: 70px; }
.w72 { width: 72px; }
.w76 { width: 76px; }
.rows { display: flex; flex-direction: column; flex: none; }
.rows.grow { flex: 1; }
.tool { height: 24px; gap: 4px; justify-content: flex-start; }
.tool .caret { margin-left: auto; margin-right: 12px; }
.w36 .caret { margin-left: 2px; }
.annotation .tool .caret { margin-right: 8px; }
.block .tool .caret { margin-right: 4px; }
.tool.on { border: 1px solid #24345c; background: linear-gradient(#6f93c0, #54709c); }

.combo { display: flex; align-items: center; height: 22px; border: 1px solid #2e2e2e; background: linear-gradient(#4a4a4a, #6a6a6a); padding-right: 2px; }
.combo select { flex: 1; min-width: 0; appearance: none; }
.swatch { flex: none; width: 15px; height: 15px; background: #7ffcff; border: 1px solid #c8c8c8; }
.swatch.outlined { border-color: #000; }
.stack { display: grid; grid-template-rows: 24px 24px 24px; width: 208px; align-items: center; }
.layer-combo { gap: 4px; padding-left: 4px; }
.icon-line { display: flex; }
.cell { width: 24px; height: 24px; }
.icon-line .tool { padding-left: 2px; }
.prop-rows { display: grid; grid-template: repeat(3, 24px) / 20px 180px; align-items: center; }
.prop-rows label { padding-left: 2px; }
.color-combo { padding-left: 12px; }
.color-combo select { padding-left: 10px; }
.line-combo { padding-left: 3px; }
.rule { width: 64px; height: 1px; background: #fff; margin-right: 2px; }

/* Drawing tabs */
.files { display: flex; align-items: flex-end; flex: none; height: 29px; padding-left: 22px; background: #383838; border-bottom: 3px solid #5c5c5c; }
.file { display: flex; align-items: center; height: 23px; border-radius: 10px 10px 0 0; background: #555; color: #b4b4b4; }
.start { width: 123px; padding-left: 10px; }
.current { width: 195px; padding-left: 10px; gap: 12px; background: linear-gradient(#8a8a8a, #5c5c5c); color: #fff; }
.add { width: 22px; height: 15px; margin: 0 0 3px 4px; border-radius: 4px 10px 4px 10px; background: #555; font-size: 16px; font-weight: 700; color: #ccc; }

/* Drawing area */
.canvas { position: relative; flex: 1; min-height: 0; background: #212830; overflow: hidden; }
.drawing { position: absolute; inset: 0; }
.view-label { position: absolute; left: 3px; top: 6px; color: #dcdcdc; font-size: 12px; }
.view-tools { position: absolute; right: 3px; top: 9px; display: flex; flex-direction: column; align-items: flex-end; }
.view-buttons { display: flex; gap: 4px; padding-right: 5px; }
.view-buttons button { width: 16px; height: 13px; }
.cube { margin: 10px 13px 0 0; text-anchor: middle; font-family: "Liberation Sans", Arial, sans-serif; font-weight: 700; }
.compass { font-size: 22px; fill: #a9adb3; }
.face { font-size: 12px; fill: #45494c; }
.wcs { width: 48px; height: 18px; margin: 13px 55px 0 0; gap: 6px; border: 1px solid #8b9096; border-radius: 4px; background: #a2a4ac; color: #555a60; font-family: "Liberation Sans", Arial, sans-serif; }
.navbar { margin-top: 25px; border-radius: 4px; background: #5a6164; }

.command { position: absolute; left: 385px; right: 384px; bottom: 0; font: 12px/15px "Liberation Mono", "DejaVu Sans Mono", monospace; }
.command output { display: inline-block; margin: 0 0 2px 60px; padding: 0 1px; border-radius: 2px; background: #50555b; color: #e4e4e4; vertical-align: bottom; }
.command-bar { display: flex; align-items: center; height: 26px; padding-right: 2px; border: 1px solid #888; background: #bcbdbf; }
.command-tools { display: flex; align-items: center; justify-content: space-between; width: 53px; height: 24px; margin-right: 5px; padding: 0 4px 0 3px; background: linear-gradient(#666, #404040); }
.command-bar .caret { margin: 0 6px 0 4px; }
.command-bar input { flex: 1; font-style: italic; }
.command-bar input::placeholder { color: #6c6e70; opacity: 1; }

/* Bottom bar */
.bottom { display: flex; flex: none; justify-content: space-between; height: 23px; background: linear-gradient(90deg, #404040, #333 30%); border-top: 1px solid #5a5a5a; }
.layouts { display: flex; gap: 5px; padding-left: 14px; color: #c0c0c0; }
.layouts a { height: 18px; padding: 0 10px; border-radius: 0 0 8px 8px; background: #5c5c5c; }
.layouts .active { background: #868686; color: #fff; font-weight: 700; }
.layouts .plus { padding: 0 7px; font-size: 14px; font-weight: 700; background: #4a4a4a; }
.status { display: flex; gap: 1px; font-size: 12px; }
.seg { display: flex; padding-top: 1px; border: 1px solid #707070; border-bottom: 0; background: #474747; }
.status button { width: 22px; height: 21px; }
.status .arrow { width: 17px; }
.status .on { width: 24px; background: #5a8fc8; border: 1px solid #474747; }
.status .model { width: 47px; }
.status .scale { width: 36px; gap: 3px; }
.status .isolate { width: 26px; }
.seg.last { gap: 2px; border-right: 0; }

/* Overlays */
.watermark { position: absolute; left: 809px; top: 5px; z-index: 5; color: #fff; font: 700 26px/28px "DejaVu Sans", sans-serif; text-shadow: 0 0 2px #333, 0 0 3px #444, 1px 1px 3px #444; }
.watermark small { font-size: 23px; }
.pointer { position: absolute; left: 808px; top: 32px; z-index: 6; pointer-events: none; }
```
